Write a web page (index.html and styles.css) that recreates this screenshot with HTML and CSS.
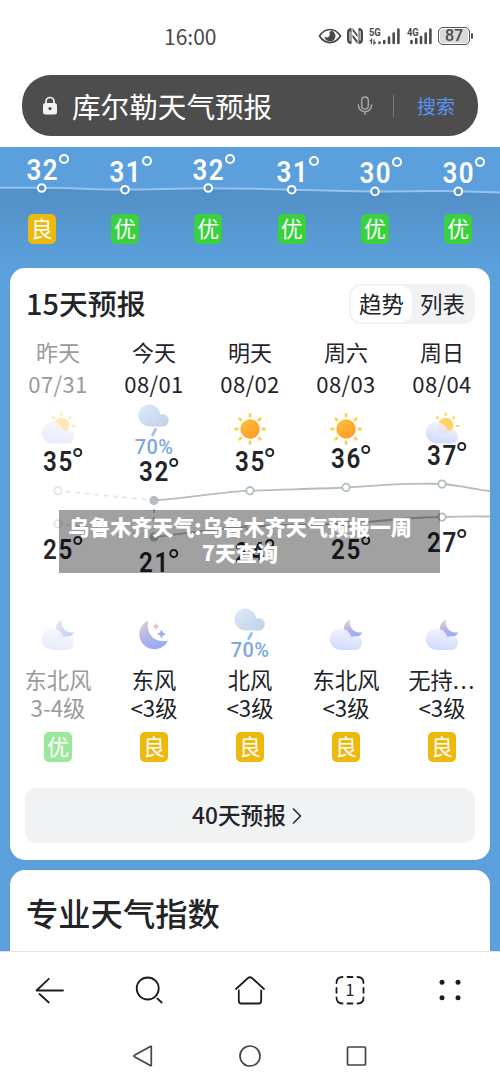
FILE: index.html
```html
<!DOCTYPE html>
<html lang="zh-CN">
<head>
<meta charset="utf-8">
<title>库尔勒天气预报</title>
<link rel="stylesheet" href="styles.css">
</head>
<body>
<svg class="defs" width="0" height="0" aria-hidden="true">
  <defs>
    <linearGradient id="gSun" x1="0" y1="0" x2="1" y2="1"><stop offset="0" stop-color="#ffc043"/><stop offset="1" stop-color="#ff9620"/></linearGradient>
    <linearGradient id="gSun2" x1="0" y1="1" x2="1" y2="0"><stop offset="0" stop-color="#ffa53c"/><stop offset="1" stop-color="#ffc800"/></linearGradient>
    <linearGradient id="gCloud" x1=".6" y1="0" x2=".3" y2="1"><stop offset="0" stop-color="#f3f4fc"/><stop offset="1" stop-color="#cbd6fb"/></linearGradient>
    <linearGradient id="gRain" x1="0" y1="0" x2="1" y2="1"><stop offset="0" stop-color="#dfeafa"/><stop offset="1" stop-color="#bfd0ea"/></linearGradient>
    <linearGradient id="gMoon" x1=".2" y1="0" x2=".6" y2="1"><stop offset="0" stop-color="#e6ccd3"/><stop offset=".5" stop-color="#b1b5e6"/><stop offset="1" stop-color="#94acf8"/></linearGradient>
    <linearGradient id="gGlow" x1=".2" y1="1" x2=".9" y2="0"><stop offset="0" stop-color="#fff" stop-opacity=".3"/><stop offset="1" stop-color="#ffd070" stop-opacity=".75"/></linearGradient>
  </defs>
  <symbol id="sunny" viewBox="0 0 36 36">
    <g stroke="#ffd04a" stroke-width="2.800" stroke-linecap="round"><path d="M18 3.500v1.800M18 30.700v1.800M3.500 18h1.800M30.700 18h1.800M7.700 7.700l1.300 1.300M27 27l1.300 1.300M7.700 28.300l1.300-1.300M27 9l1.300-1.300"/></g>
    <circle cx="18" cy="18" r="9.700" fill="url(#gSun)"/>
  </symbol>
  <symbol id="cloudy" viewBox="0 0 36 36">
    <g stroke="#ffd13f" stroke-width="2" stroke-linecap="round"><path d="M21.500 2.500v1.500M12.800 6.200l1 1M30.200 6.200l-1 1M33 15h1.500M29.300 23l1 1"/></g>
    <circle cx="21.500" cy="14.700" r="7.700" fill="url(#gSun2)"/>
    <path d="M12.500 32.500a10.700 10.700 0 1 1 6.800-19c2.500 1.500 3.700 4 4.500 6.200 1.500-.8 3-1 4.200-1 8 0 8 13.800 0 13.800z" fill="url(#gCloud)" fill-opacity=".92"/>
    <path d="M14.300 12a10 10 0 0 1 9.300 8.200q2-1.300 5-1.300a7.700 7.700 0 0 0 .6-4.200a7.700 7.700 0 0 0-14.900-2.700z" fill="url(#gGlow)"/>
  </symbol>
  <symbol id="rainy" viewBox="0 0 36 36">
    <path d="M13.500 25.500a11 11 0 1 1 10.200-14.500a6 6 0 0 1 .3 2.300a6.400 6.400 0 1 1 4.500 12.200z" fill="url(#gRain)"/>
    <path d="M19.500 28.500l-2.800 5.200" stroke="#a1c2f5" stroke-width="3" stroke-linecap="round"/>
  </symbol>
  <symbol id="moon" viewBox="0 0 36 36">
    <path d="M12.500 4.500A15 15 0 1 0 32 24.500C19 28 9 18 12.500 4.500z" fill="url(#gMoon)"/>
    <path d="M20 7.500q.5 2.500 3 3-2.500.5-3 3-.5-2.500-3-3 2.500-.5 3-3z" fill="#e9c5cb" stroke="#e9c5cb" stroke-width=".6"/>
    <path d="M25.500 14q.7 3.300 4 4-3.300.7-4 4-.7-3.300-4-4 3.300-.7 4-4z" fill="#9babe8" stroke="#9babe8" stroke-width=".6"/>
  </symbol>
  <symbol id="nightcloud" viewBox="0 0 36 36">
    <path d="M22 3.500C14.500 7 14 16 19 20c5 4 12 2 15.500-3.700C26.500 18 20 11 22 3.500z" fill="url(#gMoon)"/>
    <path d="M12.500 34a10.700 10.700 0 1 1 9-16.500q1 1.600 2.300 3.700c1.500-.8 3-1.100 4.200-1.100q5 .3 5.700 4.500c1 5-2 9.400-5.700 9.400z" fill="url(#gCloud)" fill-opacity=".93"/>
  </symbol>
</svg>

<header class="status">
  <span class="clock">16:00</span>
  <div class="status-icons">
    <svg class="eye" width="24" height="16" viewBox="0 0 24 16"><path d="M1.500 8C7-.7 17-.7 22.500 8 17 16.700 7 16.700 1.500 8z" fill="none" stroke="#4a4a4a" stroke-width="1.700"/><path d="M13 2.500a5.600 5.600 0 1 1-6.700 6q2.500 2 4.700 0 1.700-2 .3-3.800z" fill="#4a4a4a"/></svg>
    <svg class="nfc" width="16" height="16" viewBox="0 0 16 16"><path d="M4.500 0v16Q0 16 0 11.500v-7Q0 0 4.500 0zM11.500 0Q16 0 16 4.500v7Q16 16 11.500 16z" fill="#4a4a4a"/><path d="M5.500 0l5 6.500v2.700L5.500 3zM5.500 6.200l5 6.300V16l-5-6.500z" fill="#4a4a4a"/><path d="M3 3.500v9.500M13.100 3v9.500" stroke="#fff" stroke-width="1"/></svg>
    <div class="signal five"><b>5G</b><svg width="31" height="17" viewBox="0 0 31 17"><g stroke="#4a4a4a" stroke-width="2.600" stroke-linecap="round"><path d="M10.500 15v-.5M15.200 15v-2M20 15V9.500M24.700 15V5.500M29.400 15V1.500"/></g><path d="M2.500 16v-4.500L.8 13.300M5 11.500V16l1.800-1.800" fill="none" stroke="#4a4a4a" stroke-width="1.200"/></svg></div>
    <div class="signal four"><b>4G</b><svg width="25" height="17" viewBox="0 0 25 17"><g stroke="#4a4a4a" stroke-width="2.600" stroke-linecap="round"><path d="M4.500 15v-2M9.200 15v-4M14 15V9M18.700 15V5.500M23.400 15V1.500"/></g></svg></div>
    <div class="battery"><span>87</span></div><i class="battery-tip"></i>
  </div>
</header>

<div class="search">
  <svg class="lock" width="16" height="20" viewBox="0 0 16 20"><path d="M4 8V5.500a4 4 0 0 1 8 0V8" fill="none" stroke="#f2f2f2" stroke-width="1.700"/><path fill-rule="evenodd" d="M3.500 7h9Q15 7 15 9.500V16Q15 18.500 12.500 18.500h-9Q1 18.500 1 16V9.500Q1 7 3.500 7zM8 11a1.600 1.600 0 1 0 .01 0z" fill="#f2f2f2"/></svg>
  <span class="query">库尔勒天气预报</span>
  <svg class="mic" width="16" height="20" viewBox="0 0 16 20"><rect x="4.700" y="1" width="6.600" height="12" rx="3.300" fill="none" stroke="#a5a5a5" stroke-width="1.500"/><path d="M1.300 8.500c0 9.500 13.400 9.500 13.400 0M8 15.500V19" fill="none" stroke="#a5a5a5" stroke-width="1.500"/></svg>
  <i class="divider"></i>
  <span class="go">搜索</span>
</div>

<main class="page">
  <section class="hourly">
    <svg class="hour-line" width="500" height="121" viewBox="0 147 500 121">
      <defs><linearGradient id="gHour" x1="0" y1="0" x2="0" y2="1"><stop offset="0" stop-color="#528fc5"/><stop offset="1" stop-color="#5ba0dc"/></linearGradient></defs>
      <path d="M0 187.800H42C75 188 95 189.600 125 189.600S175 188.300 208 188.300 260 188.800 291.500 189.700 345 191.400 375 191.400 430 190.800 458.500 191.200L500 192.500V268H0z" fill="url(#gHour)"/>
      <path d="M0 187.800H42C75 188 95 189.600 125 189.600S175 188.300 208 188.300 260 188.800 291.500 189.700 345 191.400 375 191.400 430 190.800 458.500 191.200L500 192.500" fill="none" stroke="#94c3ed" stroke-width="2"/>
      <g fill="#5592c9" stroke="#fff" stroke-width="2"><circle cx="41.700" cy="188" r="3.800"/><circle cx="125" cy="189.700" r="3.800"/><circle cx="208.300" cy="188" r="3.800"/><circle cx="291.700" cy="189.700" r="3.800"/><circle cx="375" cy="191.400" r="3.800"/><circle cx="458.300" cy="191.400" r="3.800"/></g>
    </svg>
    <div class="hour"><span class="temp" style="margin-top:7px">32<i></i></span><b class="aqi fair">良</b></div>
    <div class="hour"><span class="temp" style="margin-top:9px">31<i></i></span><b class="aqi good">优</b></div>
    <div class="hour"><span class="temp" style="margin-top:7px">32<i></i></span><b class="aqi good">优</b></div>
    <div class="hour"><span class="temp" style="margin-top:9px">31<i></i></span><b class="aqi good">优</b></div>
    <div class="hour"><span class="temp" style="margin-top:10px">30<i></i></span><b class="aqi good">优</b></div>
    <div class="hour"><span class="temp" style="margin-top:10px">30<i></i></span><b class="aqi good">优</b></div>
  </section>

  <section class="card forecast">
    <div class="card-head">
      <h2>15天预报</h2>
      <div class="tabs"><span class="tab on">趋势</span><span class="tab">列表</span></div>
    </div>
    <div class="days">
      <div class="day past">
        <span class="line">昨天</span><span class="line date">07/31</span>
        <div class="high"><svg class="wx"><use href="#cloudy"/></svg><span class="temp" style="margin-bottom:23px">35<i></i></span></div>
        <div class="low"><span class="temp" style="margin-top:35px">25<i></i></span></div>
        <div class="night"><svg class="wx"><use href="#nightcloud"/></svg></div>
        <span class="wind">东北风</span><span class="wind">3-4级</span><b class="aqi good">优</b>
      </div>
      <div class="day">
        <span class="line">今天</span><span class="line date">08/01</span>
        <div class="high wet"><svg class="wx"><use href="#rainy"/></svg><em>70%</em><span class="temp" style="margin-bottom:13px">32<i></i></span></div>
        <div class="low"><span class="temp" style="margin-top:48px">21<i></i></span></div>
        <div class="night"><svg class="wx"><use href="#moon"/></svg></div>
        <span class="wind">东风</span><span class="wind">&lt;3级</span><b class="aqi fair">良</b>
      </div>
      <div class="day">
        <span class="line">明天</span><span class="line date">08/02</span>
        <div class="high"><svg class="wx"><use href="#sunny"/></svg><span class="temp" style="margin-bottom:23px">35<i></i></span></div>
        <div class="low"><span class="temp" style="margin-top:38px">24<i></i></span></div>
        <div class="night wet"><svg class="wx"><use href="#rainy"/></svg><em>70%</em></div>
        <span class="wind">北风</span><span class="wind">&lt;3级</span><b class="aqi fair">良</b>
      </div>
      <div class="day">
        <span class="line">周六</span><span class="line date">08/03</span>
        <div class="high"><svg class="wx"><use href="#sunny"/></svg><span class="temp" style="margin-bottom:26px">36<i></i></span></div>
        <div class="low"><span class="temp" style="margin-top:35px">25<i></i></span></div>
        <div class="night"><svg class="wx"><use href="#nightcloud"/></svg></div>
        <span class="wind">东北风</span><span class="wind">&lt;3级</span><b class="aqi fair">良</b>
      </div>
      <div class="day">
        <span class="line">周日</span><span class="line date">08/04</span>
        <div class="high"><svg class="wx"><use href="#cloudy"/></svg><span class="temp" style="margin-bottom:29px">37<i></i></span></div>
        <div class="low"><span class="temp" style="margin-top:28px">27<i></i></span></div>
        <div class="night"><svg class="wx"><use href="#nightcloud"/></svg></div>
        <span class="wind">无持<span class="dots">...</span></span><span class="wind">&lt;3级</span><b class="aqi fair">良</b>
      </div>
      <svg class="trend" width="480" height="80" viewBox="0 470 480 80">
        <g fill="none" stroke="#b3bcc0" stroke-width="1.800">
          <g stroke="#e3e5e7" stroke-dasharray="4.500 5"><path d="M56 491.500L140 500"/><path d="M56 524.500L140 535"/></g>
          <path d="M144 509v22" stroke-dasharray="4 4"/>
          <path d="M144 500.500C180 498 210 492 240 490.700S305 489 336 487.500 390 482.500 432 484C453 485.500 466 490 480 491"/>
          <path d="M144 537C180 533 210 528 240 526.500S305 525 336 523.500 390 517.500 432 517Q455 516 480 516.500"/>
        </g>
        <g fill="#fff" stroke="#b3bcc0" stroke-width="1.800">
          <circle cx="240" cy="490.700" r="3.700"/><circle cx="336" cy="487.400" r="3.700"/><circle cx="432" cy="484.100" r="3.700"/>
          <circle cx="240" cy="527" r="3.700"/><circle cx="336" cy="524" r="3.700"/><circle cx="432" cy="517.100" r="3.700"/>
          <g stroke="#e3e5e7"><circle cx="48" cy="490.700" r="3.700"/><circle cx="48" cy="523.800" r="3.700"/></g>
        </g>
        <g fill="#b3bcc0"><circle cx="144" cy="500.500" r="4.500"/><circle cx="144" cy="537" r="4.500"/></g>
      </svg>
    </div>
    <div class="more"><span>40天预报</span><svg width="12" height="18" viewBox="0 0 12 18"><path d="M2 1.500L9.500 9 2 16.500" fill="none" stroke="#222428" stroke-width="1.500"/></svg></div>
  </section>

  <section class="card index"><h2>专业天气指数</h2></section>
</main>

<nav class="toolbar">
  <svg width="40" height="40" viewBox="0 0 40 40"><path d="M33 20.500H7M18.800 8.800L6.500 20.500M9.500 24L18.800 32.500"/></svg>
  <svg width="40" height="40" viewBox="0 0 40 40"><circle cx="17.700" cy="18.500" r="11"/><path d="M27.300 28.500l4.400 4"/></svg>
  <svg width="40" height="40" viewBox="0 0 40 40"><path d="M6 19L18 8q2-1.600 4 0L34 19M8.800 20.500V31q0 2.500 2.500 2.500h17.400q2.500 0 2.500-2.500V20.500"/></svg>
  <div class="pages"><svg width="40" height="40" viewBox="0 0 40 40"><path d="M12.500 7Q6.500 7 6.500 13M27.500 7q6 0 6 6M33.500 27.500q0 6-6 6M12.500 33.500q-6 0-6-6M17.500 7h5M17.500 33.500h5M6.500 17.800v5M33.500 17.800v5"/></svg><span>1</span></div>
  <svg width="40" height="40" viewBox="0 0 40 40"><g class="solid"><circle cx="12" cy="12.300" r="2.500"/><circle cx="28" cy="12.300" r="2.500"/><circle cx="12" cy="27.700" r="2.500"/><circle cx="28" cy="27.700" r="2.500"/></g></svg>
</nav>
<footer class="system">
  <svg width="28" height="28" viewBox="0 0 28 28"><path d="M21.300 4.500q1-.5 1 .5v18q0 1-1 .5L5.500 14.700q-1-.7 0-1.400z"/></svg>
  <svg width="28" height="28" viewBox="0 0 28 28"><circle cx="14" cy="14" r="10"/></svg>
  <svg width="28" height="28" viewBox="0 0 28 28"><rect x="4.500" y="5" width="18" height="18" rx=".8"/></svg>
</footer>

<div class="caption">乌鲁木齐天气:乌鲁木齐天气预报一周<br>7天查询</div>
</body>
</html>
```
FILE: styles.css
```css
* { box-sizing: border-box; }
body {
  position: relative;
  margin: 0;
  width: 500px;
  height: 1083px;
  overflow: hidden;
  background: #fff;
  color: #222428;
  font-family: "Noto Sans CJK SC", sans-serif;
}
h2, b, i, em { margin: 0; font-style: normal; font-weight: 400; }
.defs { display: block; position: absolute; }

.status {
  display: flex;
  align-items: flex-start;
  justify-content: space-between;
  height: 75px;
  padding: 26px 27px 0 164px;
  color: #4a4a4a;
}
.clock { font-size: 21px; line-height: 20px; }
.status-icons { display: flex; align-items: center; height: 20px; }
.eye { margin-right: 5px; }
.nfc { margin-right: 6px; }
.signal { position: relative; height: 17px; }
.signal svg { display: block; }
.signal b { position: absolute; left: 0; top: -1px; font: 700 11px/11px Roboto, sans-serif; transform: scaleX(.85); transform-origin: left; }
.five { margin-right: 7px; }
.four { margin-right: 6px; }
.battery {
  width: 32px;
  height: 18px;
  border: 1.5px solid #555;
  border-radius: 5px;
  background: #d9d9d9;
  box-shadow: inset 0 0 0 1px #fff;
  text-align: center;
  font: 500 16px/16px Roboto, sans-serif;
}
.battery-tip { width: 2px; height: 6px; margin-left: 1px; border-radius: 1px; background: #555; }

.search {
  display: flex;
  align-items: center;
  height: 61px;
  margin: 0 22px;
  padding: 0 23px 0 20px;
  border-radius: 29px;
  background: #4d4d4d;
}
.query { margin-left: 14px; color: #fff; font-size: 28.600px; line-height: 40px; }
.mic { margin-left: auto; }
.divider { width: 1px; height: 22px; margin: 0 23px 0 20px; background: #777; }
.go { color: #5b92ee; font-size: 19px; line-height: 28px; }

.page { height: 804px; margin-top: 11px; overflow: hidden; background: #5ba0dc; }
.hourly { display: grid; grid-template-columns: repeat(6, 1fr); position: relative; height: 121px; color: #fff; }
.hour-line { position: absolute; left: 0; top: 0; }
.hour { display: flex; flex-direction: column; align-items: center; justify-content: space-between; position: relative; padding-bottom: 24px; }
.temp {
  flex: none;
  position: relative;
  height: 30px;
  padding-left: 2px;
  font: 600 27.500px/30px Roboto, sans-serif;
  letter-spacing: 2px;
  transform: scaleX(.88);
}
.temp i {
  position: absolute;
  left: calc(50% + 18.500px);
  top: 1px;
  width: 9px;
  height: 9px;
  border: 2px solid currentColor;
  border-radius: 50%;
  transform: scaleX(1.136);
}
.hour .temp { height: 32px; font-size: 29.500px; line-height: 32px; letter-spacing: 1.500px; padding-left: 1.500px; }
.hour .temp i { left: calc(50% + 20px); top: 0; width: 10px; height: 10px; }
.aqi { width: 28px; height: 30px; border-radius: 5px; color: #fff; text-align: center; font-size: 22px; line-height: 26px; }
.good { background: #39d13d; }
.fair { background: #ecb90c; }

.card { margin: 0 10px; border-radius: 15px; background: #fff; }
.forecast { height: 592px; }
.card-head { display: flex; align-items: flex-start; justify-content: space-between; height: 67px; padding: 16px 15px 0 16px; }
.card-head h2 { font-size: 28.900px; line-height: 37px; font-weight: 500; }
.tabs { display: flex; height: 40px; padding: 2px; border-radius: 12px; background: #f1f2f4; }
.tab { width: 61px; border-radius: 10px; text-align: center; font-size: 22.500px; line-height: 34px; }
.tab.on { background: #fff; }
.days { display: grid; grid-template-columns: repeat(5, 96px); position: relative; }
.day { display: flex; flex-direction: column; align-items: center; }
.line { font-size: 22px; line-height: 32px; }
.date { letter-spacing: .4px; }
.high { display: flex; flex-direction: column; align-items: center; justify-content: space-between; height: 101px; padding-top: 12px; }
.high > .wx { margin-bottom: -8px; }
.low { height: 100px; }
.low .temp { display: block; }
.wx { display: block; flex: none; width: 36px; height: 36px; }
.high.wet { padding-top: 2px; }
.wet em { height: 18px; margin-top: -1px; color: #7ea7e3; font: 500 20px/20px Roboto, sans-serif; letter-spacing: .3px; }
.high.wet em { margin-top: 8px; }
.high.wet .temp { margin-top: auto; }
.night { display: flex; flex-direction: column; align-items: center; height: 65px; padding-top: 16px; }
.night.wet { padding-top: 5px; }
.wind { font-size: 22.300px; line-height: 28px; white-space: nowrap; }
.dots { letter-spacing: 1.500px; }
.day .aqi { margin-top: 11px; }
.past > .line, .past > .wind { color: #9a9a9b; }
.past .wx, .past > .aqi { opacity: .5; }
.trend { position: absolute; left: 0; top: 135px; }
.more {
  display: flex;
  align-items: center;
  justify-content: center;
  gap: 5px;
  height: 55px;
  margin: 26px 15px 0;
  padding-right: 5px;
  border-radius: 12px;
  background: #f1f2f4;
  font-size: 22.700px;
  font-weight: 500;
}
.more span { padding-bottom: 2px; line-height: 51px; }
.index { height: 100px; margin-top: 10px; padding: 18px 16px; }
.index h2 { font-size: 32.300px; line-height: 48px; font-weight: 500; }

.toolbar {
  display: grid;
  grid-template-columns: repeat(5, 100px);
  place-items: center;
  height: 78px;
  padding-bottom: 2px;
  border-top: 1px solid #e4e4e4;
}
.toolbar svg { display: block; fill: none; stroke: #1d1d1f; stroke-width: 1.800; stroke-linecap: round; }
.toolbar .solid { fill: #1d1d1f; stroke: none; }
.pages { display: grid; place-items: center; }
.pages > * { grid-area: 1 / 1; }
.pages span { font-size: 16px; line-height: 38px; padding-bottom: 2px; }
.system { display: grid; grid-template-columns: repeat(3, 1fr); place-items: center; width: 320px; height: 54px; margin: 0 auto; }
.system svg { fill: none; stroke: #444; stroke-width: 1.700; }

.caption {
  position: absolute;
  left: 59px;
  top: 510px;
  width: 381px;
  height: 63px;
  padding: 3px 27px 0 8px;
  background: rgba(0, 0, 0, .37);
  color: #fff;
  text-align: center;
  font-size: 21px;
  font-weight: 900;
  line-height: 26px;
  white-space: nowrap;
}
```
